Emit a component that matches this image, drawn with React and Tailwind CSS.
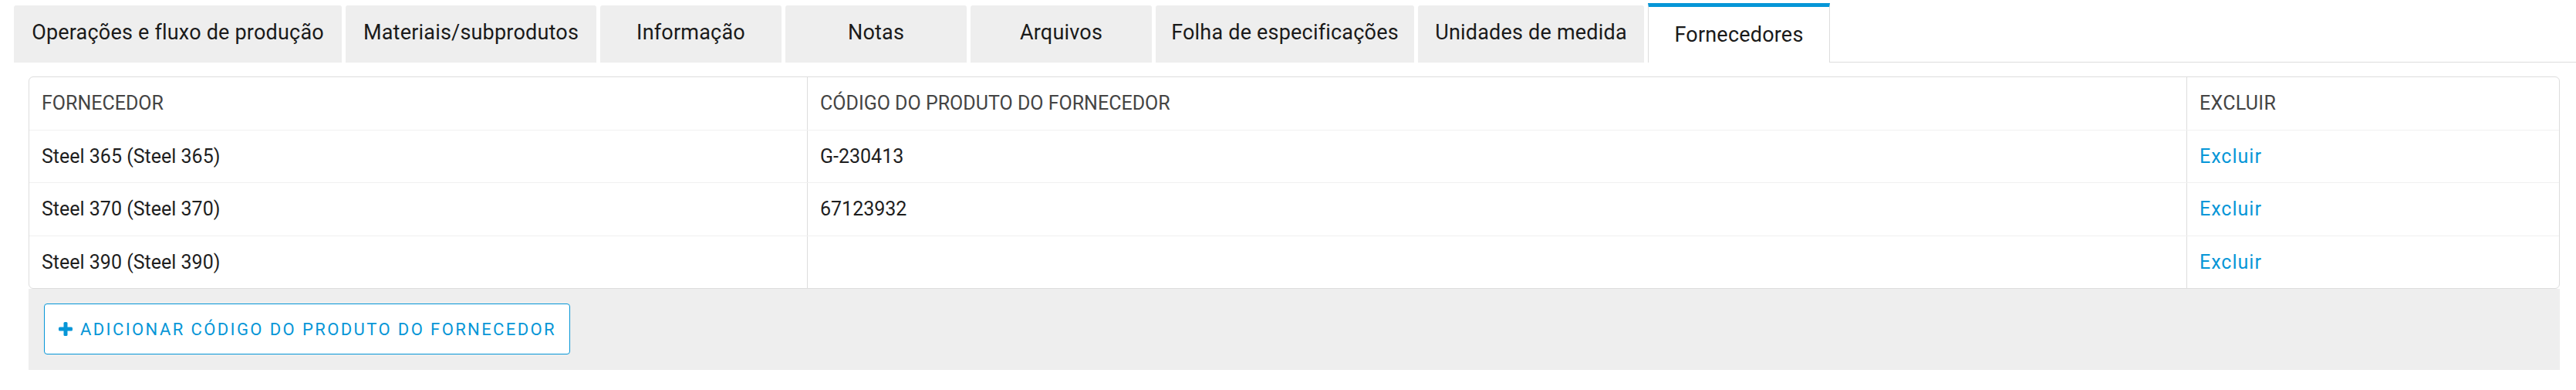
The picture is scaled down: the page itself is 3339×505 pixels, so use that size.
const tabs = [
  { label: "Operações e fluxo de produção", width: "w-[425px]" },
  { label: "Materiais/subprodutos", width: "w-[325px]" },
  { label: "Informação", width: "w-[235px]" },
  { label: "Notas", width: "w-[235px]" },
  { label: "Arquivos", width: "w-[235px]" },
  { label: "Folha de especificações", width: "w-[335px]" },
  { label: "Unidades de medida", width: "w-[293px]" },
  { label: "Fornecedores", width: "w-[236px]", active: true },
];

const rows = [
  { supplier: "Steel 365 (Steel 365)", code: "G-230413", h: "h-[68px] border-b border-[#f0f0f0]" },
  { supplier: "Steel 370 (Steel 370)", code: "67123932", h: "h-[69px] border-b border-[#f0f0f0]" },
  { supplier: "Steel 390 (Steel 390)", code: "", h: "h-[67px]" },
];

function PlusIcon() {
  return (
    <svg width="18" height="18" viewBox="0 0 18 18" className="shrink-0">
      <rect x="6.5" y="0" width="5" height="18" rx="1.5" fill="#0696d7" />
      <rect x="0" y="6.5" width="18" height="5" rx="1.5" fill="#0696d7" />
    </svg>
  );
}

export default function App() {
  return (
    <div className="min-h-screen bg-white pt-[4px] font-['Roboto',sans-serif]">
      {/* tab strip */}
      <div className="flex items-end gap-[5px] pl-[18px] h-[77px]">
        {tabs.map((t) =>
          t.active ? (
            <div
              key={t.label}
              className={`${t.width} h-[77px] shrink-0 flex items-center justify-center bg-white border-t-[5px] border-t-[#0696d7] border-x border-x-[#dddddd] text-[27px] tracking-[0.2px] text-[#1a1a1a] pt-[1px]`}
            >
              {t.label}
            </div>
          ) : (
            <div
              key={t.label}
              className={`${t.width} h-[74px] shrink-0 flex items-center justify-center bg-[#eeeeee] rounded-t-[3px] text-[27px] tracking-[0.2px] text-[#1a1a1a] pb-[3px]`}
            >
              {t.label}
            </div>
          )
        )}
        <div className="flex-1 h-full border-b border-[#dddddd] -ml-[5px]"></div>
      </div>

      {/* suppliers table */}
      <div className="mt-[18px] ml-[37px] mr-[21px]">
        <div className="bg-white border border-[#dddddd] rounded-[6px] text-[25px]">
          <div className="grid grid-cols-[1009px_1788px_1fr] h-[69px] border-b border-[#f0f0f0] text-[#444444]">
            <div className="flex items-center px-4 border-r border-[#dddddd]">FORNECEDOR</div>
            <div className="flex items-center px-4 border-r border-[#dddddd]">CÓDIGO DO PRODUTO DO FORNECEDOR</div>
            <div className="flex items-center px-4 tracking-[0.3px]">EXCLUIR</div>
          </div>
          {rows.map((r) => (
            <div key={r.supplier} className={`grid grid-cols-[1009px_1788px_1fr] ${r.h} text-[#1e1e1e]`}>
              <div className="flex items-center px-4 border-r border-[#dddddd]">{r.supplier}</div>
              <div className="flex items-center px-4 border-r border-[#dddddd]">{r.code}</div>
              <div className="flex items-center px-4">
                <a className="text-[#0696d7] tracking-[1px] cursor-pointer">Excluir</a>
              </div>
            </div>
          ))}
        </div>
        <div className="bg-[#eeeeee] pt-[19px] pb-[20px] pl-[20px]">
          <button className="h-[66px] w-[682px] flex items-center gap-[10px] pl-[18px] bg-white border border-[#0696d7] rounded-[4px] text-[#0696d7] text-[22px] tracking-[2.4px] uppercase">
            <PlusIcon />
            Adicionar código do produto do fornecedor
          </button>
        </div>
      </div>
    </div>
  );
}
